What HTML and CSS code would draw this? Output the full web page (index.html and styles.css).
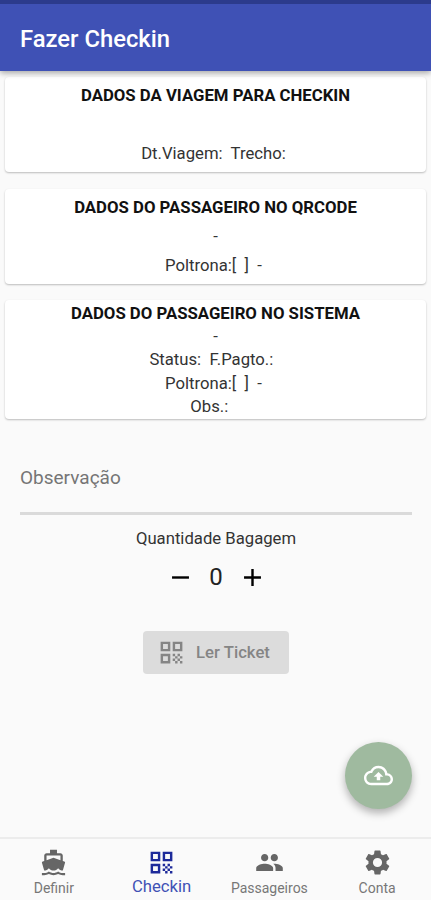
FILE: index.html
```html
<!DOCTYPE html>
<html lang="pt-BR">
  <head>
    <meta charset="utf-8" />
    <meta name="viewport" content="width=device-width, initial-scale=1" />
    <title>Fazer Checkin</title>
    <link rel="stylesheet" href="styles.css">
  </head>
  <body>
    <!-- shared icon for the ticket button and the tab bar -->
    <svg class="defs" width="0" height="0">
      <symbol id="qr" viewBox="0 0 24 24">
        <path d="M3 11h8V3H3v8zm2-6h4v4H5V5zM3 21h8v-8H3v8zm2-6h4v4H5v-4zM13 3v8h8V3h-8zm6 6h-4V5h4v4zM19 19h2v2h-2zM13 13h2v2h-2zM15 15h2v2h-2zM13 17h2v2h-2zM15 19h2v2h-2zM17 17h2v2h-2zM17 13h2v2h-2zM19 15h2v2h-2z" />
      </symbol>
    </svg>

    <header>
      <h1>Fazer Checkin</h1>
    </header>

    <main>
      <section class="card">
        <h2>DADOS DA VIAGEM PARA CHECKIN</h2>
        <p></p>
        <p>Dt.Viagem:&nbsp; Trecho:&nbsp;</p>
      </section>

      <section class="card">
        <h2>DADOS DO PASSAGEIRO NO QRCODE</h2>
        <p>-</p>
        <p>Poltrona:[&nbsp; ]&nbsp; -&nbsp;</p>
      </section>

      <section class="card compact">
        <h2>DADOS DO PASSAGEIRO NO SISTEMA</h2>
        <p>-</p>
        <p>Status:&nbsp; F.Pagto.:&nbsp;&nbsp;</p>
        <p>Poltrona:[&nbsp; ]&nbsp; -&nbsp;</p>
        <p>Obs.:&nbsp;&nbsp;&nbsp;</p>
      </section>

      <form>
        <input class="obs" type="text" placeholder="Observação" />
        <div class="label">Quantidade Bagagem</div>
        <div class="stepper">
          <button type="button" class="step">
            <svg viewBox="0 0 24 24"><path d="M5 11h14v2H5z" /></svg>
          </button>
          <span class="count">0</span>
          <button type="button" class="step">
            <svg viewBox="0 0 24 24"><path d="M19 13h-6v6h-2v-6H5v-2h6V5h2v6h6v2z" /></svg>
          </button>
        </div>
        <button type="button" class="ticket" disabled>
          <svg viewBox="0 0 24 24"><use href="#qr" /></svg>
          Ler Ticket
        </button>
      </form>
    </main>

    <button type="button" class="fab">
      <svg viewBox="0 0 24 24"><path d="M19.35 10.04C18.67 6.59 15.64 4 12 4 9.11 4 6.6 5.64 5.35 8.04 2.34 8.36 0 10.91 0 14c0 3.31 2.69 6 6 6h13c2.76 0 5-2.24 5-5 0-2.64-2.05-4.78-4.65-4.96zM19 18H6c-2.21 0-4-1.79-4-4s1.79-4 4-4h.71C7.37 7.69 9.48 6 12 6c3.04 0 5.5 2.46 5.5 5.5v.5H19c1.66 0 3 1.34 3 3s-1.34 3-3 3zM8 13h2.55v3h2.9v-3H16l-4-4z" /></svg>
    </button>

    <nav>
      <a class="tab" href="#">
        <svg viewBox="-.5 -.5 25 25"><path d="M20 21c-1.39 0-2.78-.47-4-1.32-2.44 1.71-5.56 1.71-8 0C6.78 20.53 5.39 21 4 21H2v2h2c1.38 0 2.74-.35 4-.99 2.52 1.29 5.48 1.29 8 0 1.26.65 2.62.99 4 .99h2v-2h-2zM3.95 19H4c1.6 0 3.02-.88 4-2 .98 1.12 2.4 2 4 2s3.02-.88 4-2c.98 1.12 2.4 2 4 2h.05l1.89-6.68c.08-.26.06-.54-.06-.78s-.34-.42-.6-.5L20 10.62V6c0-1.1-.9-2-2-2h-3V1H9v3H6c-1.1 0-2 .9-2 2v4.62l-1.29.42c-.26.08-.48.26-.6.5s-.15.52-.06.78L3.95 19zM6 6h12v3.97L12 8 6 9.97V6z" /></svg>
        <span>Definir</span>
      </a>
      <a class="tab active" href="#">
        <svg viewBox="0 0 24 24"><use href="#qr" /></svg>
        <span>Checkin</span>
      </a>
      <a class="tab" href="#">
        <svg viewBox="0 0 24 24"><path d="M16 11c1.66 0 2.99-1.34 2.99-3S17.66 5 16 5s-3 1.34-3 3 1.34 3 3 3zM8 11c1.66 0 2.99-1.34 2.99-3S9.66 5 8 5 5 6.34 5 8s1.34 3 3 3zM8 13c-2.33 0-7 1.170-7 3.500V19h14v-2.500C15 14.170 10.330 13 8 13zM16 13c-.29 0-.62.02-.97.05 1.160.84 1.970 1.970 1.970 3.450V19h6v-2.500C23 14.170 18.330 13 16 13z" /></svg>
        <span>Passageiros</span>
      </a>
      <a class="tab" href="#">
        <svg viewBox="0 0 24 24"><path d="M12 15.800A3.800 3.800 0 0 1 8.200 12 3.800 3.800 0 0 1 12 8.200a3.800 3.800 0 0 1 3.800 3.800 3.800 3.800 0 0 1-3.800 3.800m7.430-2.830c.04-.32.07-.64.07-.97s-.03-.66-.07-1l2.110-1.630c.19-.15.24-.42.12-.64l-2-3.460c-.12-.22-.39-.31-.61-.22l-2.490 1c-.52-.39-1.060-.73-1.690-.98l-.37-2.650A.506.506 0 0 0 14 2h-4c-.25 0-.46.18-.5.42l-.37 2.650c-.63.25-1.170.59-1.690.98l-2.490-1c-.22-.09-.49 0-.61.22l-2 3.460c-.13.22-.07.49.12.64L4.570 11c-.04.34-.07.67-.07 1s.03.65.07.97l-2.110 1.660c-.19.15-.25.42-.12.64l2 3.460c.12.22.39.3.61.22l2.490-1.010c.52.4 1.060.74 1.690.99l.37 2.650c.04.24.25.42.5.42h4c.25 0 .46-.18.5-.42l.37-2.650c.63-.26 1.170-.59 1.690-.99l2.490 1.010c.22.08.49 0 .61-.22l2-3.460c.12-.22.07-.49-.12-.64z" /></svg>
        <span>Conta</span>
      </a>
    </nav>
  </body>
</html>
```
FILE: styles.css
```css
* {
  margin: 0;
  padding: 0;
  box-sizing: border-box;
}
body {
  display: flex;
  flex-direction: column;
  height: 100vh;
  overflow: hidden;
  background-color: #fafafa;
  color: #333;
  font-family: Roboto, Arial, sans-serif;
  font-size: 16.7px;
}
svg {
  display: block;
  width: 29px;
  height: 29px;
  fill: currentColor;
}
.defs {
  position: absolute;
  width: 0;
  height: 0;
}
button {
  border: 0;
  background: none;
  font-family: inherit;
}
header {
  height: 71px;
  padding: 8px 20px 0;
  border-top: 4px solid #2c3b8c;
  background-color: #3f51b5;
  color: #fff;
  box-shadow: 0 2px 6px rgba(0, 0, 0, 0.35);
  z-index: 1;
}
h1 {
  font-size: 23.8px;
  font-weight: 500;
  line-height: 54px;
}
main {
  flex: 1;
  padding: 6px 5px 0;
}
.card {
  height: 95px;
  margin-bottom: 17px;
  padding-top: 4px;
  border-radius: 4px;
  background-color: #fff;
  box-shadow: 0 1px 2px rgba(0, 0, 0, 0.25);
  text-align: center;
  line-height: 29px;
}
.card h2 {
  color: #111;
  font-size: 16.75px;
  font-weight: 700;
  line-height: inherit;
}
.card p {
  min-height: 29px;
}
.card.compact {
  height: 119px;
  margin-top: -1px;
  padding-top: 2px;
  line-height: 23.2px;
}
.card.compact p {
  min-height: 0;
}

form {
  display: flex;
  flex-direction: column;
  align-items: center;
  padding: 0 14px 0 15px;
}
.obs {
  width: 100%;
  height: 71px;
  margin-top: 8px;
  padding-bottom: 1px;
  border: 0;
  border-bottom: 3px solid #dadada;
  background: none;
  font-family: inherit;
  font-size: 19px;
}
.obs::placeholder {
  color: #757575;
}
.label {
  margin-top: 13px;
  line-height: 22px;
}
.stepper {
  display: flex;
  align-items: center;
  margin-top: 10px;
  color: #222;
}
.count {
  width: 43px;
  font-size: 24px;
  line-height: 34px;
  text-align: center;
}
.ticket {
  display: flex;
  align-items: center;
  gap: 10px;
  height: 43px;
  margin-top: 37px;
  padding: 0 19px 0 14px;
  border-radius: 4px;
  background-color: #dcdcdc;
  color: #858585;
  font-size: 16.7px;
  font-weight: 500;
}

.fab {
  position: absolute;
  top: 742px;
  right: 19px;
  display: flex;
  align-items: center;
  justify-content: center;
  width: 67px;
  height: 67px;
  border-radius: 50%;
  background-color: #9fba9f;
  color: #fff;
  box-shadow: 0 4px 8px rgba(0, 0, 0, 0.3);
}

nav {
  display: flex;
  height: 63px;
  border-top: 2px solid #ececec;
  background-color: #fafafa;
}
.tab {
  flex: 1;
  display: flex;
  flex-direction: column;
  align-items: center;
  padding-top: 9px;
  color: #666;
  font-size: 14px;
  line-height: 23px;
  text-decoration: none;
}
.tab span {
  color: #777;
}
.tab.active {
  color: #1d2a9a;
  font-size: 16.7px;
  line-height: 20px;
}
.tab.active span {
  color: #3f51b5;
}
```
